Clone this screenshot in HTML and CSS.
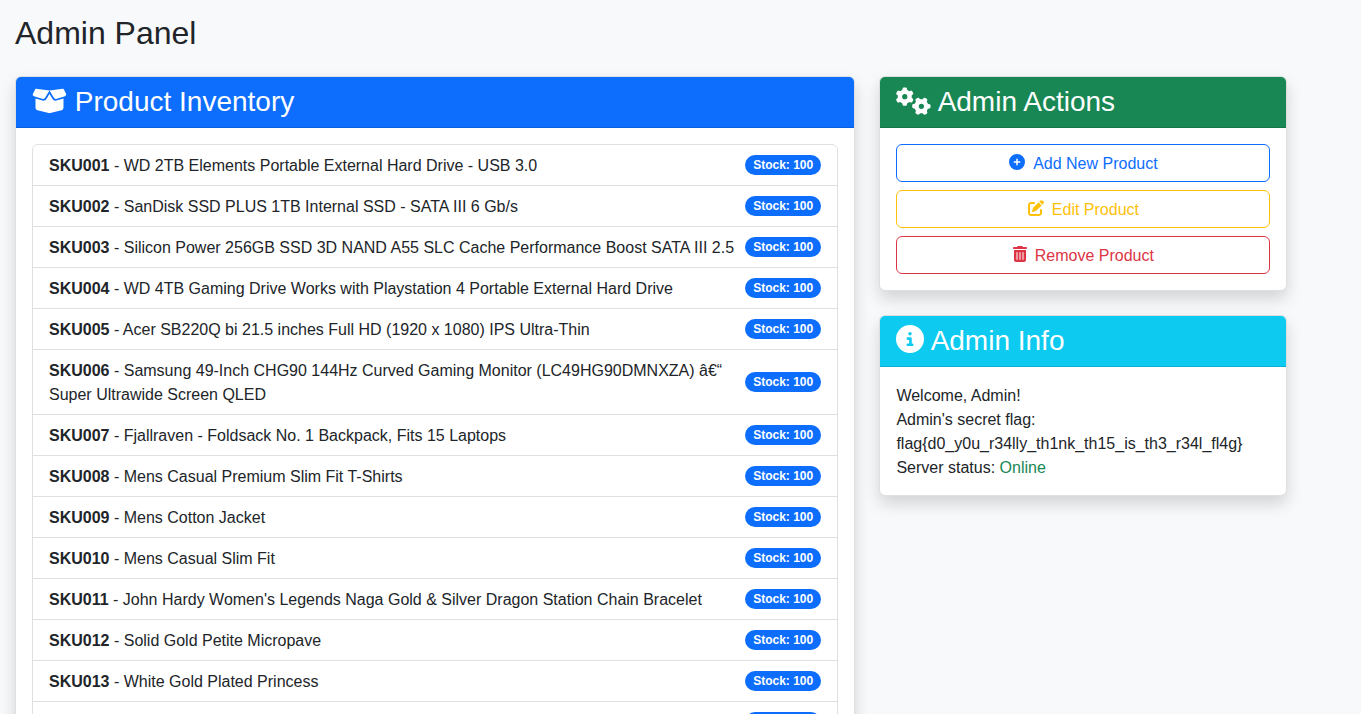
FILE: index.html
```html
<!DOCTYPE html>
<html lang="en">
<head>
<meta charset="utf-8">
<title>Admin Panel</title>
<link rel="stylesheet" href="styles.css">
</head>
<body>
<main class="page">
  <h1 class="page-title">Admin Panel</h1>
  <div class="layout">
    <section class="card">
      <h3 class="card-header header-primary"><svg class="icon icon-wide" viewBox="0 0 640 512"><path d="M58.9 42.1c3-6.1 9.6-9.6 16.3-8.7L320 64 564.8 33.4c6.7-.8 13.3 2.7 16.3 8.7l41.7 83.4c9 17.9-.6 39.6-19.8 45.1L439.6 217.3c-13.9 4-28.8-1.9-36.2-14.3L320 64 236.6 203c-7.4 12.4-22.3 18.3-36.2 14.3L37.1 170.6c-19.3-5.5-28.8-27.2-19.8-45.1L58.9 42.1zM321.1 128l54.9 91.4c14.9 24.8 44.6 36.6 72.5 28.6L576 211.6v167c0 22-15 41.2-36.4 46.6l-204.1 51c-10.2 2.6-20.9 2.6-31 0l-204.1-51C79 419.7 64 400.5 64 378.5v-167L191.6 248c27.8 8 57.6-3.8 72.5-28.6L318.9 128h2.2z"/></svg> Product Inventory</h3>
      <div class="card-body">
        <ul class="list">
          <li class="list-item"><span><strong>SKU001</strong> - WD 2TB Elements Portable External Hard Drive - USB 3.0</span><span class="badge">Stock: 100</span></li>
          <li class="list-item"><span><strong>SKU002</strong> - SanDisk SSD PLUS 1TB Internal SSD - SATA III 6 Gb/s</span><span class="badge">Stock: 100</span></li>
          <li class="list-item"><span><strong>SKU003</strong> - Silicon Power 256GB SSD 3D NAND A55 SLC Cache Performance Boost SATA III 2.5</span><span class="badge">Stock: 100</span></li>
          <li class="list-item"><span><strong>SKU004</strong> - WD 4TB Gaming Drive Works with Playstation 4 Portable External Hard Drive</span><span class="badge">Stock: 100</span></li>
          <li class="list-item"><span><strong>SKU005</strong> - Acer SB220Q bi 21.5 inches Full HD (1920 x 1080) IPS Ultra-Thin</span><span class="badge">Stock: 100</span></li>
          <li class="list-item"><span><strong>SKU006</strong> - Samsung 49-Inch CHG90 144Hz Curved Gaming Monitor (LC49HG90DMNXZA) â€“ Super Ultrawide Screen QLED</span><span class="badge">Stock: 100</span></li>
          <li class="list-item"><span><strong>SKU007</strong> - Fjallraven - Foldsack No. 1 Backpack, Fits 15 Laptops</span><span class="badge">Stock: 100</span></li>
          <li class="list-item"><span><strong>SKU008</strong> - Mens Casual Premium Slim Fit T-Shirts</span><span class="badge">Stock: 100</span></li>
          <li class="list-item"><span><strong>SKU009</strong> - Mens Cotton Jacket</span><span class="badge">Stock: 100</span></li>
          <li class="list-item"><span><strong>SKU010</strong> - Mens Casual Slim Fit</span><span class="badge">Stock: 100</span></li>
          <li class="list-item"><span><strong>SKU011</strong> - John Hardy Women's Legends Naga Gold &amp; Silver Dragon Station Chain Bracelet</span><span class="badge">Stock: 100</span></li>
          <li class="list-item"><span><strong>SKU012</strong> - Solid Gold Petite Micropave</span><span class="badge">Stock: 100</span></li>
          <li class="list-item"><span><strong>SKU013</strong> - White Gold Plated Princess</span><span class="badge">Stock: 100</span></li>
          <li class="list-item"><span><strong>SKU014</strong></span><span class="badge">Stock: 100</span></li>
        </ul>
      </div>
    </section>
    <aside class="sidebar">
      <section class="card">
        <h3 class="card-header header-success"><svg class="icon icon-wide" viewBox="0 0 640 512"><path d="M308.5 135.3c7.1-6.3 9.9-16.2 6.2-25c-2.3-5.3-4.8-10.5-7.6-15.5L304 89.4c-3-5-6.3-9.9-9.8-14.6c-5.7-7.6-15.7-10.1-24.7-7.1l-28.2 9.3c-10.7-8.8-23-16-36.2-20.9L199 27.1c-1.9-9.3-9.1-16.7-18.5-17.8C173.9 8.4 167.2 8 160.4 8h-.7c-6.8 0-13.5 .4-20.1 1.2c-9.4 1.1-16.6 8.6-18.5 17.8L115 56.1c-13.3 5-25.5 12.1-36.2 20.9L50.5 67.8c-9-3-19-.5-24.7 7.1c-3.5 4.7-6.8 9.6-9.9 14.6l-3 5.3c-2.8 5-5.3 10.2-7.6 15.6c-3.7 8.7-.9 18.6 6.2 25l22.2 19.8C32.6 161.9 32 168.9 32 176s.6 14.1 1.7 20.9L11.5 216.7c-7.1 6.3-9.9 16.2-6.2 25c2.3 5.3 4.8 10.5 7.6 15.6l3 5.2c3 5.1 6.3 9.9 9.9 14.6c5.7 7.6 15.7 10.1 24.7 7.1l28.2-9.3c10.7 8.8 23 16 36.2 20.9l6.1 29.1c1.9 9.3 9.1 16.7 18.5 17.8c6.7 .8 13.5 1.2 20.4 1.2s13.7-.4 20.4-1.2c9.4-1.1 16.6-8.6 18.5-17.8l6.1-29.1c13.3-5 25.5-12.1 36.2-20.9l28.2 9.3c9 3 19 .5 24.7-7.1c3.5-4.7 6.8-9.5 9.8-14.6l3.1-5.4c2.8-5 5.3-10.2 7.6-15.5c3.7-8.7 .9-18.6-6.2-25l-22.2-19.8c1.1-6.8 1.7-13.8 1.7-20.9s-.6-14.1-1.7-20.9l22.2-19.8zM112 176a48 48 0 1 1 96 0 48 48 0 1 1 -96 0zM504.7 500.5c6.3 7.1 16.2 9.9 25 6.2c5.3-2.3 10.5-4.8 15.5-7.6l5.4-3.1c5-3 9.9-6.3 14.6-9.8c7.6-5.7 10.1-15.7 7.1-24.7l-9.3-28.2c8.8-10.7 16-23 20.9-36.2l29.1-6.1c9.3-1.9 16.7-9.1 17.8-18.5c.8-6.7 1.2-13.5 1.2-20.4s-.4-13.7-1.2-20.4c-1.1-9.4-8.6-16.6-17.8-18.5L583.9 307c-5-13.3-12.1-25.5-20.9-36.2l9.3-28.2c3-9 .5-19-7.1-24.7c-4.7-3.5-9.6-6.8-14.6-9.9l-5.3-3c-5-2.8-10.2-5.3-15.6-7.6c-8.7-3.7-18.6-.9-25 6.2l-19.8 22.2c-6.8-1.1-13.8-1.7-20.9-1.7s-14.1 .6-20.9 1.7l-19.8-22.2c-6.3-7.1-16.2-9.9-25-6.2c-5.3 2.3-10.5 4.8-15.6 7.6l-5.2 3c-5.1 3-9.9 6.3-14.6 9.9c-7.6 5.7-10.1 15.7-7.1 24.7l9.3 28.2c-8.8 10.7-16 23-20.9 36.2L315.1 313c-9.3 1.9-16.7 9.1-17.8 18.5c-.8 6.7-1.2 13.5-1.2 20.4s.4 13.7 1.2 20.4c1.1 9.4 8.6 16.6 17.8 18.5l29.1 6.1c5 13.3 12.1 25.5 20.9 36.2l-9.3 28.2c-3 9-.5 19 7.1 24.7c4.7 3.5 9.5 6.8 14.6 9.8l5.4 3.1c5 2.8 10.2 5.3 15.5 7.6c8.7 3.7 18.6 .9 25-6.2l19.8-22.2c6.8 1.1 13.8 1.7 20.9 1.7s14.1-.6 20.9-1.7l19.8 22.2zM464 304a48 48 0 1 1 0 96 48 48 0 1 1 0-96z"/></svg> Admin Actions</h3>
        <div class="card-body actions">
          <a class="btn btn-primary"><svg class="icon" viewBox="0 0 512 512"><path d="M256 512A256 256 0 1 0 256 0a256 256 0 1 0 0 512zM232 344V280H168c-13.3 0-24-10.7-24-24s10.7-24 24-24h64V168c0-13.3 10.7-24 24-24s24 10.7 24 24v64h64c13.3 0 24 10.7 24 24s-10.7 24-24 24H280v64c0 13.3-10.7 24-24 24s-24-10.7-24-24z"/></svg>Add New Product</a>
          <a class="btn btn-warning"><svg class="icon" viewBox="0 0 512 512"><path d="M471.6 21.7c-21.9-21.9-57.3-21.9-79.2 0L362.3 51.7l97.9 97.9 30.1-30.1c21.9-21.9 21.9-57.3 0-79.2L471.6 21.7zm-299.2 220c-6.1 6.1-10.8 13.6-13.5 21.9l-29.6 88.8c-2.9 8.6-.6 18.1 5.8 24.6s15.9 8.7 24.6 5.8l88.8-29.6c8.2-2.7 15.7-7.4 21.9-13.5L437.7 172.3 339.7 74.3 172.4 241.7zM96 64C43 64 0 107 0 160V416c0 53 43 96 96 96H352c53 0 96-43 96-96V320c0-17.7-14.3-32-32-32s-32 14.3-32 32v96c0 17.7-14.3 32-32 32H96c-17.7 0-32-14.3-32-32V160c0-17.7 14.3-32 32-32h96c17.7 0 32-14.3 32-32s-14.3-32-32-32H96z"/></svg>Edit Product</a>
          <a class="btn btn-danger"><svg class="icon icon-narrow" viewBox="0 0 448 512"><path d="M135.2 17.7C140.6 6.8 151.7 0 163.8 0H284.2c12.1 0 23.2 6.8 28.6 17.7L320 32h96c17.7 0 32 14.3 32 32s-14.3 32-32 32H32C14.3 96 0 81.7 0 64S14.3 32 32 32h96l7.2-14.3zM32 128H416V448c0 35.3-28.7 64-64 64H96c-35.3 0-64-28.7-64-64V128zm96 64c-8.8 0-16 7.2-16 16V432c0 8.8 7.2 16 16 16s16-7.2 16-16V208c0-8.8-7.2-16-16-16zm96 0c-8.8 0-16 7.2-16 16V432c0 8.8 7.2 16 16 16s16-7.2 16-16V208c0-8.8-7.2-16-16-16zm96 0c-8.8 0-16 7.2-16 16V432c0 8.8 7.2 16 16 16s16-7.2 16-16V208c0-8.8-7.2-16-16-16z"/></svg>Remove Product</a>
        </div>
      </section>
      <section class="card">
        <h3 class="card-header header-info"><svg class="icon" viewBox="0 0 512 512"><path d="M256 512A256 256 0 1 0 256 0a256 256 0 1 0 0 512zM216 336h24V272H216c-13.3 0-24-10.7-24-24s10.7-24 24-24h48c13.3 0 24 10.7 24 24v88h8c13.3 0 24 10.7 24 24s-10.7 24-24 24H216c-13.3 0-24-10.7-24-24s10.7-24 24-24zm40-208a32 32 0 1 1 0 64 32 32 0 1 1 0-64z"/></svg> Admin Info</h3>
        <div class="card-body info-body">
          <p class="info-line">Welcome, Admin!</p>
          <p class="info-line">Admin's secret flag:</p>
          <p class="info-line">flag{d0_y0u_r34lly_th1nk_th15_is_th3_r34l_fl4g}</p>
          <p class="info-line">Server status: <span class="status-online">Online</span></p>
        </div>
      </section>
    </aside>
  </div>
</main>
</body>
</html>
```

FILE: styles.css
```css
* { box-sizing: border-box; }

html, body { margin: 0; }

body {
  background: #f8f9fa;
  color: #212529;
  font-family: "Liberation Sans", Arial, sans-serif;
  font-size: 16px;
  line-height: 1.5;
}

.page { padding: 14px 15px 24px; }

.page-title {
  margin: 0 0 24px;
  font-size: 32px;
  font-weight: 400;
  line-height: 1.2;
}

.layout {
  display: grid;
  grid-template-columns: 840px 408px;
  column-gap: 24.4px;
  align-items: start;
}

.sidebar {
  display: flex;
  flex-direction: column;
  gap: 24px;
}

.card {
  background: #fff;
  border: 1px solid rgba(0, 0, 0, .125);
  border-radius: 6px;
  box-shadow: 0 8px 16px rgba(0, 0, 0, .15);
  overflow: hidden;
}

.card-header {
  margin: 0;
  padding: 8px 16px;
  border-bottom: 1px solid rgba(0, 0, 0, .125);
  color: #fff;
  font-size: 28px;
  font-weight: 400;
  line-height: 1.2;
}

.header-primary { background: #0d6efd; }
.header-success { background: #198754; }
.header-info { background: #0dcaf0; }

.card-body { padding: 16px; }

.info-body { padding: 17px 16px 15px; }

.icon {
  display: inline-block;
  width: 1em;
  height: 1em;
  fill: currentColor;
  vertical-align: -.125em;
}

.icon-wide { width: 1.25em; }
.icon-narrow { width: .875em; }

.list {
  margin: 0;
  padding: 0;
  list-style: none;
  border: 1px solid rgba(0, 0, 0, .125);
  border-radius: 6px;
}

.list-item {
  display: flex;
  justify-content: space-between;
  align-items: center;
  padding: 9px 16px 7px;
  border-top: 1px solid rgba(0, 0, 0, .125);
}

.list-item:first-child { border-top: 0; }

.badge {
  flex: none;
  margin: -2px 0 0 10px;
  padding: 4.2px 7.8px;
  border-radius: 50rem;
  background: #0d6efd;
  color: #fff;
  font-size: 12px;
  font-weight: 700;
  line-height: 1;
}

.actions {
  display: flex;
  flex-direction: column;
  gap: 8px;
}

.btn {
  display: block;
  padding: 7px 12px 5px;
  border: 1px solid;
  border-radius: 6px;
  text-align: center;
}

.btn .icon {
  margin-right: 8px;
  vertical-align: -1px;
}

.btn-primary { border-color: #0d6efd; color: #0d6efd; }
.btn-warning { border-color: #ffc107; color: #ffc107; }
.btn-danger { border-color: #dc3545; color: #dc3545; }

.info-line { margin: 0; }

.status-online { color: #198754; }
```
